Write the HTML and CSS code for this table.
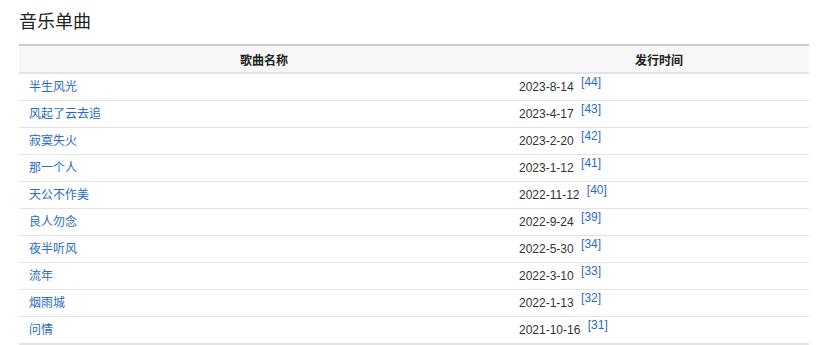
FILE: index.html
```html
<!DOCTYPE html>
<html lang="zh">
<head>
<meta charset="utf-8">
<link rel="stylesheet" href="styles.css">
</head>
<body>
<h2 class="title">音乐单曲</h2>
<table class="songs">
  <thead>
    <tr><th class="c-name">歌曲名称</th><th class="c-date">发行时间</th></tr>
  </thead>
  <tbody>
    <tr><td><a href="#">半生风光</a></td><td>2023-8-14 <sup><a href="#">[44]</a></sup></td></tr>
    <tr><td><a href="#">风起了云去追</a></td><td>2023-4-17 <sup><a href="#">[43]</a></sup></td></tr>
    <tr><td><a href="#">寂寞失火</a></td><td>2023-2-20 <sup><a href="#">[42]</a></sup></td></tr>
    <tr><td><a href="#">那一个人</a></td><td>2023-1-12 <sup><a href="#">[41]</a></sup></td></tr>
    <tr><td><a href="#">天公不作美</a></td><td>2022-11-12 <sup><a href="#">[40]</a></sup></td></tr>
    <tr><td><a href="#">良人勿念</a></td><td>2022-9-24 <sup><a href="#">[39]</a></sup></td></tr>
    <tr><td><a href="#">夜半听风</a></td><td>2022-5-30 <sup><a href="#">[34]</a></sup></td></tr>
    <tr><td><a href="#">流年</a></td><td>2022-3-10 <sup><a href="#">[33]</a></sup></td></tr>
    <tr><td><a href="#">烟雨城</a></td><td>2022-1-13 <sup><a href="#">[32]</a></sup></td></tr>
    <tr><td><a href="#">问情</a></td><td>2021-10-16 <sup><a href="#">[31]</a></sup></td></tr>
  </tbody>
</table>
</body>
</html>
```
FILE: styles.css
```css
html, body {
  margin: 0;
  padding: 0;
  background: #fff;
}
body {
  padding: 0 12px 0 19px;
  font-family: "Liberation Sans", "Noto Sans CJK SC", sans-serif;
  font-size: 12px;
  color: #333;
}
.title {
  margin: 0;
  padding-top: 9px;
  height: 44px;
  box-sizing: border-box;
  font-size: 18px;
  line-height: 26px;
  font-weight: normal;
  color: #222;
}
.songs {
  width: 790px;
  border-collapse: collapse;
  border-top: 2px solid #cccccc;
  border-bottom: 2px solid #e4e4e4;
  table-layout: fixed;
}
.songs th {
  background: #f7f7f7;
  height: 26px;
  padding: 0 10px;
  font-weight: bold;
  color: #222;
  text-align: center;
  border-bottom: 2px solid #e4e4e4;
}
.c-name { width: 470px; }
.c-date { width: 280px; }
.songs td {
  height: 26px;
  padding: 0 10px;
  border-bottom: 1px solid #e4e4e4;
  line-height: 16px;
  vertical-align: middle;
}
.songs tbody tr:last-child td {
  border-bottom: 2px solid #e4e4e4;
}
.songs a {
  color: #2a6bc2;
  text-decoration: none;
}
.songs sup {
  font-size: 12px;
  vertical-align: 5px;
  line-height: 0;
  margin-left: 4px;
}
```
